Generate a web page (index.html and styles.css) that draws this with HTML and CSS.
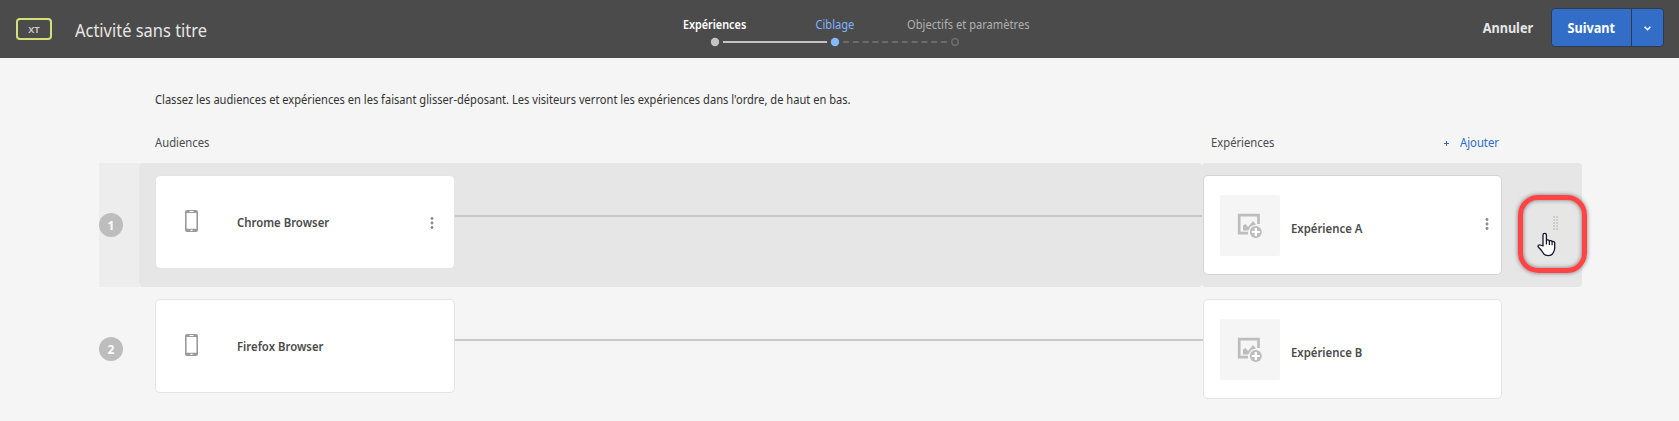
FILE: index.html
```
<!DOCTYPE html>
<html lang="fr">
<head>
<meta charset="utf-8">
<title>Activité sans titre</title>
<link rel="stylesheet" href="styles.css">
</head>
<body>
<header class="topbar">
  <div class="brand">
    <span class="badge">XT</span>
    <h1 class="title">Activité sans titre</h1>
  </div>
  <nav class="steps">
    <div class="labels">
      <span class="step done"><span>Expériences</span></span>
      <span class="step active"><span>Ciblage</span></span>
      <span class="step todo"><span>Objectifs et paramètres</span></span>
    </div>
    <svg class="track" width="250" height="10" viewBox="0 0 250 10">
      <circle cx="5" cy="5" r="4.2" fill="#c4c4c4"/>
      <path d="M13 5h104" stroke="#c4c4c4" stroke-width="2"/>
      <circle cx="125" cy="5" r="4.2" fill="#84b8ff"/>
      <path d="M133 5h105" stroke="#6b6b6b" stroke-width="2" stroke-dasharray="6 3.8"/>
      <circle cx="245" cy="5" r="3.3" fill="none" stroke="#6b6b6b" stroke-width="1.7"/>
    </svg>
  </nav>
  <div class="actions">
    <span class="cancel"><span>Annuler</span></span>
    <div class="split">
      <span class="next"><span>Suivant</span></span>
      <span class="more"><svg width="7" height="5" viewBox="0 0 7 5"><path d="M.6.8l2.900 2.900L6.400.8" fill="none" stroke="#fff" stroke-width="1.600"/></svg></span>
    </div>
  </div>
</header>
<main class="content">
  <p class="intro">Classez les audiences et expériences en les faisant glisser-déposant. Les visiteurs verront les expériences dans l'ordre, de haut en bas.</p>
  <div class="heads">
    <span class="head head-aud">Audiences</span>
    <span class="head">Expériences</span>
    <span class="add"><svg width="5" height="5" viewBox="0 0 5 5"><path d="M2.5 0v5M0 2.500h5" stroke="#2c6bc9"/></svg><span class="head">Ajouter</span></span>
  </div>
  <section class="row selected">
    <div class="rank"><span class="num">1</span></div>
    <div class="aud">
      <div class="card aud-card">
        <svg class="phone" width="13" height="22" viewBox="0 0 13 22"><path fill="#9b9b9b" fill-rule="evenodd" d="M2 0h9a2 2 0 0 1 2 2v18a2 2 0 0 1-2 2H2a2 2 0 0 1-2-2V2a2 2 0 0 1 2-2zM1.6 3v15.8h9.8V3zM4.5 1v1h4V1zM5.5 19.8V21h2v-1.2z"/></svg>
        <span class="name">Chrome Browser</span>
        <svg class="dots" width="4" height="12" viewBox="0 0 4 12" fill="#8c8c8c"><circle cx="2" cy="1.5" r="1.45"/><circle cx="2" cy="6" r="1.45"/><circle cx="2" cy="10.5" r="1.45"/></svg>
      </div>
      <div class="link"></div>
    </div>
    <div class="exp">
      <div class="card exp-card">
        <div class="thumb"><svg width="25" height="25" viewBox="0 0 25 25"><path d="M21.500 11V2.200H2.200v18H11" fill="none" stroke="#bdbdbd" stroke-width="2.700"/><path fill="#bdbdbd" d="M6 12.500l2.500-1.500 2.500 3 5-6 3 3.500-8 6H6z"/><circle cx="18.800" cy="19" r="7.300" fill="#f5f5f5"/><circle cx="18.800" cy="19" r="6" fill="#bdbdbd"/><path d="M18.800 15v8M14.800 19h8" stroke="#fff" stroke-width="2.200"/></svg></div>
        <span class="name">Expérience A</span>
        <svg class="dots" width="4" height="12" viewBox="0 0 4 12" fill="#8c8c8c"><circle cx="2" cy="1.5" r="1.45"/><circle cx="2" cy="6" r="1.45"/><circle cx="2" cy="10.5" r="1.45"/></svg>
      </div>
      <svg class="grip" width="5" height="14" viewBox="0 0 5 14"><path d="M1 .5v13M4 .5v13" stroke="#a8a89c" stroke-width="1.6" stroke-dasharray="1 2"/></svg>
    </div>
    <div class="callout"></div>
    <svg class="hand" width="19" height="25" viewBox="0 0 19 25"><path d="M6 14V3a1.700 1.700 0 0 1 3.400 0v5.500c.3-1 2.700-.9 3 .4.700-.7 2.500-.3 2.700.8.900-.6 2.600 0 2.600 1.400v5c0 2-.6 3.200-1.400 4.400-.9 2.200-2.500 3.200-5 3.200-3 0-4.600-1.200-5.600-3.400-1-2-2.500-3.300-4.200-5.100-1.200-1.400.5-2.900 2-2.200z" fill="#fff" stroke="#15152a" stroke-width="1.300" stroke-linejoin="round"/><path d="M9.400 8.500v4M12.400 9v4M15.100 9.800v3.500" stroke="#15152a" stroke-width="1.200"/></svg>
  </section>
  <section class="row">
    <div class="rank"><span class="num">2</span></div>
    <div class="aud">
      <div class="card aud-card">
        <svg class="phone" width="13" height="22" viewBox="0 0 13 22"><path fill="#9b9b9b" fill-rule="evenodd" d="M2 0h9a2 2 0 0 1 2 2v18a2 2 0 0 1-2 2H2a2 2 0 0 1-2-2V2a2 2 0 0 1 2-2zM1.6 3v15.8h9.8V3zM4.5 1v1h4V1zM5.5 19.8V21h2v-1.2z"/></svg>
        <span class="name">Firefox Browser</span>
      </div>
      <div class="link"></div>
    </div>
    <div class="exp">
      <div class="card exp-card">
        <div class="thumb"><svg width="25" height="25" viewBox="0 0 25 25"><path d="M21.500 11V2.200H2.200v18H11" fill="none" stroke="#bdbdbd" stroke-width="2.700"/><path fill="#bdbdbd" d="M6 12.500l2.500-1.500 2.500 3 5-6 3 3.500-8 6H6z"/><circle cx="18.800" cy="19" r="7.300" fill="#f5f5f5"/><circle cx="18.800" cy="19" r="6" fill="#bdbdbd"/><path d="M18.800 15v8M14.800 19h8" stroke="#fff" stroke-width="2.200"/></svg></div>
        <span class="name">Expérience B</span>
      </div>
    </div>
  </section>
</main>
</body>
</html>
```

FILE: styles.css
```
* { box-sizing: border-box; }
body {
  margin: 0;
  height: 421px;
  overflow: hidden;
  background: #f5f5f5;
  color: #323232;
  font-family: "Noto Sans", "Open Sans", sans-serif;
  font-size: 12.5px;
}
svg { display: block; flex: none; }
span { white-space: nowrap; }

.topbar {
  display: grid;
  grid-template-columns: 670px 1fr auto;
  height: 58px;
  background: #4b4b4b;
}
.brand { display: flex; align-items: center; padding-left: 16px; gap: 23px; }
.badge {
  display: flex;
  align-items: center;
  justify-content: center;
  width: 36px;
  height: 22px;
  border: 2px solid #d6e07a;
  border-radius: 4px;
  color: #d0d0d0;
  font-size: 9.5px;
  font-weight: 600;
}
.title { margin: 1px 0 0; color: #e6e6e6; font-size: 18px; font-weight: 400; transform: scaleX(.914); transform-origin: left; }
.steps { padding-top: 15px; }
.labels { display: flex; height: 22px; line-height: 19px; }
.step { flex: none; width: 120px; margin-left: -15px; margin-right: 15px; text-align: center; }
.step span { display: inline-block; transform: scaleX(.89); }
.done { color: #fff; font-weight: 600; }
.done span { transform: scaleX(.866); }
.active { color: #7fb2ff; }
.todo { color: #b0b0b0; text-align: left; padding-left: 12px; }
.todo span { transform-origin: left; }
.track { margin-left: 40px; }
.actions { display: flex; align-items: flex-start; padding: 8px 15px 0 0; gap: 15px; }
.cancel, .next { color: #e6e6e6; font-size: 14px; font-weight: 700; line-height: 39px; }
.cancel span, .next span { display: inline-block; transform: scaleX(.905); }
.split { display: flex; height: 39px; border: 1px solid #2f3a4a; border-radius: 4px; background: #326ec8; }
.next { width: 80px; text-align: center; color: #fff; border-right: 1px solid #2f3a4a; line-height: 38px; }
.more { display: flex; width: 31px; align-items: center; justify-content: center; padding-top: 2px; }

.intro { width: 1000px; margin: 0 0 0 154.5px; padding-top: 32px; line-height: 20px; height: 74px; transform: scaleX(.889); transform-origin: left; }
.heads { display: grid; grid-template-columns: 154.5px 1056px 233px auto; height: 31px; padding-top: 1px; line-height: 20px; color: #4b4b4b; }
.head { transform: scaleX(.9); transform-origin: left; }
.head-aud { grid-column: 2; }
.add { display: flex; align-items: center; gap: 11px; height: 20px; color: #2c6bc9; }

.row { position: relative; display: grid; grid-template-columns: 40px 1063px 380px; width: 1483px; height: 124px; margin-left: 99px; }
.rank { padding-top: 50px; }
.num {
  display: flex;
  align-items: center;
  justify-content: center;
  width: 24px;
  height: 24px;
  border-radius: 50%;
  background: #bdbdbd;
  color: #fff;
  font-weight: 700;
  font-size: 12px;
}
.aud { display: flex; padding: 12px 0 0 16px; }
.exp { display: flex; padding: 12px 0 0 1px; }
.selected .rank { background: #ededed; }
.selected .aud { background: #e6e6e6; border-radius: 4px; }
.selected .exp { background: #e6e6e6; border-radius: 4px; }
.card { display: flex; flex: none; border: 1px solid #e4e4e4; border-radius: 5px; background: #fff; }
.aud-card { width: 300px; height: 94px; padding-left: 29px; }
.exp-card { width: 299px; height: 100px; padding-left: 16px; }
.selected .exp-card { border-color: #d4d4d4; }
.phone { margin-top: 34px; }
.name { color: #4b4b4b; font-weight: 600; line-height: 20px; transform: scaleX(.908); transform-origin: left; }
.aud-card .name { width: 192px; margin: 37px 0 0 38.5px; }
.aud-card .dots { margin: 41px 0 0 1px; }
.thumb { display: flex; width: 60px; height: 61px; margin-top: 19px; padding: 18px 0 0 17px; border-radius: 2px; background: #f5f5f5; }
.exp-card .name { width: 194px; margin: 43px 0 0 10.5px; }
.exp-card .dots { margin-top: 42px; }
.link { flex: 1; height: 2px; margin: 40px -1px 0 0; background: #c8c8c8; }
.grip { margin: 41px 0 0 51px; }
.callout {
  position: absolute;
  left: 1419px;
  top: 32px;
  width: 69px;
  height: 78px;
  border: 5px solid #fe4444;
  border-radius: 20px;
  box-shadow: 0 0 4px rgba(0,0,0,.5), inset 0 0 4px rgba(0,0,0,.5);
}
.hand { position: absolute; left: 1438px; top: 69px; }
```
